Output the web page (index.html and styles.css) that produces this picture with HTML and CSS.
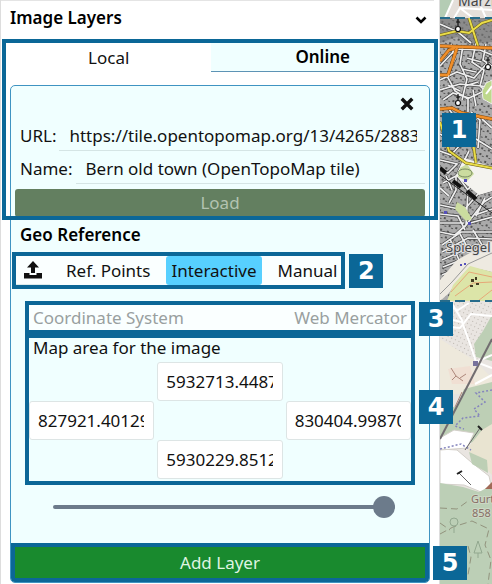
FILE: index.html
```
<!DOCTYPE html>
<html lang="en">
<head>
<meta charset="utf-8">
<meta name="viewport" content="width=device-width, initial-scale=1">
<title>Image Layers</title>
<link rel="stylesheet" href="styles.css">
</head>
<body>
<div class="app">
  <main class="panel">
    <header class="panel-head">
      <h1 class="title">Image Layers</h1>
      <button class="icon-btn" type="button" aria-label="Collapse">
        <svg width="12" height="8" viewBox="0 0 12 8"><path d="M1.500 1.500 6 6 10.500 1.500" fill="none" stroke="#000" stroke-width="2.600"/></svg>
      </button>
    </header>
    <div class="tabs">
      <button class="tab" type="button">Local</button>
      <button class="tab tab-off" type="button">Online</button>
    </div>
    <section class="card">
      <div class="close-row">
        <button class="icon-btn" type="button" aria-label="Close">
          <svg width="14" height="14" viewBox="0 0 12 12"><path d="M1.500 1.500 10.500 10.500M10.500 1.500 1.500 10.500" stroke="#111" stroke-width="2.900"/></svg>
        </button>
      </div>
      <div class="field"><label for="url">URL:</label><input id="url" class="line-input" type="text" value="https://tile.opentopomap.org/13/4265/2883.png"></div>
      <div class="field"><label for="name">Name:</label><input id="name" class="line-input" type="text" value="Bern old town (OpenTopoMap tile)"></div>
      <button class="load" type="button" disabled>Load</button>
      <h2 class="title geo">Geo Reference</h2>
      <div class="modes framed">
        <button class="mode upload" type="button" aria-label="Upload">
          <svg width="18" height="18" viewBox="0 0 18 18" fill="#111"><path d="M9 0 15 6.500H11V12H7V6.500H3Z"/><path d="M0 12H5.500V14H12.500V12H18V17.500H0Z"/></svg>
        </button>
        <button class="mode" type="button">Ref. Points</button>
        <button class="mode mode-on" type="button">Interactive</button>
        <button class="mode" type="button">Manual</button>
        <span class="badge">2</span>
      </div>
      <div class="system framed">
        <span>Coordinate System</span><span>Web Mercator</span>
        <span class="badge">3</span>
      </div>
      <div class="area framed">
        <p class="area-title">Map area for the image</p>
        <div class="bounds">
          <input class="north" type="text" aria-label="North" value="5932713.44873">
          <input class="west" type="text" aria-label="West" value="827921.401296">
          <input class="east" type="text" aria-label="East" value="830404.998706">
          <input class="south" type="text" aria-label="South" value="5930229.85123">
        </div>
        <span class="badge">4</span>
      </div>
      <input class="opacity" type="range" aria-label="Opacity" min="0" max="100" value="100">
      <div class="add framed">
        <button class="add-btn" type="button">Add Layer</button>
        <span class="badge">5</span>
      </div>
    </section>
    <div class="source-frame"><span class="badge">1</span></div>
  </main>
  <aside class="map">
    <svg viewBox="0 0 52 584" preserveAspectRatio="xMinYMin slice" role="img" aria-label="Map">
      <defs>
        <clipPath id="topo"><rect y="18" width="52" height="283"/></clipPath>
        <pattern id="houses" width="7" height="6" patternUnits="userSpaceOnUse" patternTransform="rotate(18)"><path d="M1 1h2v2h-2zM4 3h2v1h-2z" fill="#555"/></pattern>
        <pattern id="dots" width="4" height="4" patternUnits="userSpaceOnUse" patternTransform="rotate(25)"><path d="M1 1h1v1h-1z" fill="#bbb5ae"/></pattern>
        <path id="road-net" d="M0 24 18 32 31 43M0 66 16 49 40 50 52 55M0 80 17 72 34 78 49 61M11 44 15 59 7 76 15 91 28 99 28 112M23 45 20 64 27 79 22 100M36 43 32 62 44 70 40 86 52 97M46 44 43 60 52 66M0 90 20 84 52 87M3 100 13 93 29 98 44 91M0 134 14 142 31 136 52 149M0 151 11 155 22 143 22 126M0 160 17 164 8 173 0 170M3 183 16 176 16 190 9 203M0 205 24 210 38 194 52 190M0 214 18 216 25 230M0 223 24 223M0 232 15 235 26 225M29 151 17 175 28 190 26 225 44 202 52 197M2 245 21 232 52 232M2 252 28 238 52 239M2 260 33 246 52 246M3 267 39 253M2 275 43 258M2 283 25 270M10 239 19 260M20 234 30 252M33 230 42 245M35 215 52 209M30 223 52 217M36 177 28 190M31 112 40 120 38 148M42 119 52 128M8 108 18 121 33 127M27 58 41 62M22 69 36 72M25 86 38 82M33 90 36 106M8 85 20 91M2 142 10 134M0 188 9 196M6 176 12 190M30 142 34 150M45 198 36 216"/>
      </defs>
      <rect width="52" height="584" fill="#e4dfda"/>
      <path d="M0 0H13L5 18H0Z" fill="#b4ccb4"/>
      <path d="M5 18 13 0M14 18 20 8 33 18M38 0 46 18M20 8 52 10" stroke="#fff" stroke-width="2" fill="none"/>
      <g clip-path="url(#topo)">
        <rect y="18" width="52" height="283" fill="#aaa"/>
        <rect y="18" width="52" height="283" fill="url(#houses)"/>
        <path d="M0 43 17 37 28 44 52 42V18H0Z" fill="#777" opacity=".6"/>
        <g fill="none">
          <use href="#road-net" stroke="#444" stroke-width="3"/>
          <use href="#road-net" stroke="#eee" stroke-width="1.700"/>
        </g>
        <path d="M52 80 46 83 42 91 43 99 52 104Z" fill="#bed88c" stroke="#eee"/>
        <path d="M46 94 52 86" stroke="#fff" stroke-width="2"/>
        <path d="M24 158 52 167V191L39 195 16 176Z" fill="#f4f3ef"/>
        <path d="M20 168 27 164 34 174 27 181 18 177ZM17 202 25 207 32 219 26 221 15 209Z" fill="#cbdc9f"/>
        <ellipse cx="25" cy="173" rx="7" ry="4" fill="none" stroke="#788b61"/>
        <path d="M0 168 6 173M13 181 21 187M27 191 36 199" stroke="#111" stroke-width="4"/>
        <path d="M0 175 52 213" stroke="#222" stroke-width="1"/>
        <path d="M0 280 17 260 52 241V272L30 267 8 294 0 301Z" fill="#eeeae1"/>
        <path d="M0 294 12 282 28 264 52 253" stroke="#999" stroke-width="1" fill="none"/>
        <path d="M7 301 13 285 30 266 52 272V301Z" fill="#dce5a8"/>
        <path d="M11 292 29 272 52 277M15 296 33 283 52 282M38 301 52 290" stroke="#e6a878" fill="none"/>
        <path d="M31 279h3v3h-3zM35 277h2v3h-2zM30 285h3v2h-3zM36 283h3v2h-3z" fill="#443c24"/>
        <g fill="none"><path d="M0 35 17 31 29 33 42 23 52 20M0 122 9 151 26 163 52 168M29 18 38 46M32 135 36 163" stroke="#665a12" stroke-width="3"/><path d="M0 35 17 31 29 33 42 23 52 20M0 122 9 151 26 163 52 168M29 18 38 46M32 135 36 163" stroke="#e9dc48" stroke-width="2"/></g>
        <path d="M0 46 52 48M0 61 9 50 15 48M8 75 17 48M0 75 8 75M0 109 12 108 22 113 52 119" stroke="#83480b" stroke-width="3.500" fill="none"/><path d="M0 46 52 48M0 61 9 50 15 48M8 75 17 48M0 75 8 75M0 109 12 108 22 113 52 119" stroke="#f08f2b" stroke-width="2.500" fill="none"/>
        <g fill="#fff" stroke="#111" stroke-width="1.200"><circle cx="18" cy="29" r="2.500"/><path d="M18 26V19M16 22H20"/><circle cx="48" cy="67" r="2.500"/><path d="M48 64V57M46 60H50"/><circle cx="18" cy="103" r="2.500"/><path d="M18 100V94M16 97H20"/></g>
        <path d="M24 179h3v3h-3zM4 211h3v3h-3zM28 222h3v3h-3zM20 264h2v2h-2zM24 263h2v2h-2z" fill="#5550bb"/>
      </g>
      <rect y="301" width="52" height="283" fill="#e9e5e1"/>
      <path d="M0 302H52V340L34 363 0 338Z" fill="url(#dots)"/>
      <path d="M0 339 34 360 52 378V394H0Z" fill="#eee9dc"/>
      <path d="M8 369 30 366 35 384 12 384Z" fill="#f0dfd3"/>
      <path d="M52 315 43 331 34 344 36 357 52 361ZM24 389 52 382V435L30 443 0 440V407L17 407Z" fill="#bdcfb5"/>
      <path d="M0 438 14 430 34 433 27 448 0 450ZM0 449 17 450 31 462 49 476 52 490 41 492 24 485 0 484Z" fill="#fff" stroke="#d4d0ca"/>
      <path d="M27 449 42 430 52 424V475Z" fill="#e9e4d1"/>
      <path d="M29 452 47 460 48 473 32 464Z" fill="#bdcfb5"/>
      <path d="M0 483 23 487 39 492 52 485V584H0Z" fill="#bccfb6"/>
      <path d="M0 304 18 310 29 303M3 318 22 322 30 344 36 362 52 368M0 326 20 328 31 314 52 316M11 302 23 322M36 362 52 355M35 384 52 375" fill="none" stroke="#fff" stroke-width="2"/>
      <path d="M0 439 52 339" stroke="#716d70" stroke-width="2"/>
      <path d="M33 361h5v5h-5z" fill="#77739c"/><path d="M11 368 16 376 23 381M16 376 12 380M20 378 26 374M22 392 15 407" stroke="#ae877b" fill="none"/>
      <path d="M52 390 36 393 45 402 34 409 40 416 23 418 15 426 24 429M0 449 21 444 31 450" fill="none" stroke="#8585bd" stroke-width="1.500" stroke-dasharray="2 2"/>
      <path d="M25 450 40 428M19 473 31 485" stroke="#666"/><path d="M38 426 42 430M17 474 22 471" stroke="#222" stroke-width="2"/>
      <path d="M52 482 45 489 52 489Z" fill="#a16a57"/>
      <path d="M0 508 17 509 28 501M0 534 13 527 32 521 49 529 45 545 51 560 48 584M0 523 10 530M28 546 31 557 28 575" fill="none" stroke="#92937d" stroke-dasharray="7 4"/>
      <g fill="none" stroke="#92a88f"><circle cx="14" cy="522" r="4"/><path d="M14 526V533M38 541 34 553H42ZM38 553V558"/></g>
      <path d="M0 18H52M0 301H52" stroke="#276c8b" stroke-width="2" stroke-dasharray="10 5"/>
      <text class="map-label" x="18" y="6">Marzili</text>
      <text class="map-label spiegel" x="6" y="252">Spiegel</text>
      <text class="map-label peak" x="31" y="503">Gurten</text>
      <text class="map-label peak" x="32" y="517">858</text>
    </svg>
  </aside>
</div>
</body>
</html>
```
FILE: styles.css
```
* { box-sizing: border-box; }
body { margin: 0; background: #fff; color: #111; font: 17px/24px "Noto Sans", "Open Sans", sans-serif; }
button, input { font: inherit; color: inherit; margin: 0; border: 0; padding: 0; background: none; min-width: 0; }
h1, h2, p { margin: 0; }
.app { display: grid; grid-template-columns: minmax(0, 1fr) 53px; min-height: 100vh; }
.panel { position: relative; z-index: 1; border-left: 1px solid #ddd; padding-right: 5px; }
.title { font-size: 17px; font-weight: 600; line-height: 24px; color: #000; }
.panel-head { display: flex; align-items: center; justify-content: space-between; height: 43px; padding: 0 7px 8px 9px; border-top: 1px solid #e4e4e4; }
.icon-btn { display: grid; place-items: center; width: 20px; height: 20px; }
.panel-head .icon-btn { width: 12px; padding-top: 4px; }
.tabs { display: grid; grid-template-columns: 48fr 52fr; height: 29px; padding-left: 5px; }
.tab { line-height: 24px; }
.tab-off { background: #f0ffff; border-bottom: 1px solid #5d93b5; font-weight: 600; color: #000; }
.card { margin: 13px 4px 0 9px; border: 1px solid #3f94c2; border-radius: 5px; background: #f0ffff; padding: 0 4px; }
.close-row { display: flex; justify-content: flex-end; height: 32px; padding: 8px 8px 0 0; }
.field { display: flex; align-items: center; gap: 3px; height: 33px; padding-left: 5px; }
.line-input { flex: 1; height: 33px; padding: 4px 8px 1px 10px; border-bottom: 1px solid #d5e5e5; }
.field label { padding-top: 3px; }
.load { display: block; width: 100%; height: 28px; margin-top: 5px; border-radius: 3px; background: #637f60; color: #b3c3b1; line-height: 24px; }
.geo { padding: 6px 5px; height: 39px; }
.framed { position: relative; }
.framed::after { content: ""; position: absolute; inset: -4px; border: 4px solid #0b6797; pointer-events: none; }
.source-frame { position: absolute; top: 39px; left: 1px; right: 1px; height: 181px; border: 4px solid #0b6797; pointer-events: none; }
.badge { position: absolute; z-index: 2; display: grid; place-items: center; width: 34px; height: 34px; background: #0b6797; color: #fff; font: 700 24px/34px "DejaVu Sans", sans-serif; }
.source-frame .badge { right: -42px; top: 70px; }
.modes { display: flex; width: fit-content; height: 29px; margin-left: 1px; background: #faffff; }
.mode { padding: 0 16px; line-height: 26px; }
.upload { display: grid; place-items: center; width: 34px; padding: 0; border-bottom: 1px solid #dcebeb; }
.mode-on { padding: 0 5px; background: #57d0ff; border-radius: 3px; }
.modes .mode:nth-child(4) { padding-right: 4px; }
.modes .badge { right: -42px; top: -2px; }
.system { display: flex; justify-content: space-between; align-items: center; height: 25px; margin: 20px 14px 0; padding: 0 4px; background: #faffff; color: #999f9f; }
.system .badge { right: -42px; top: -3px; }
.area { margin: 8px 14px 0; height: 143px; }
.area-title { padding: 0 4px; height: 24px; line-height: 20px; }
.bounds { display: grid; grid-template: repeat(3, 39px) / repeat(3, minmax(0, 1fr)); column-gap: 3px; }
.bounds input { width: 100%; padding: 0 9px 0 8px; border: 1px solid #dde5e5; border-radius: 3px; background: #fff; }
.north { grid-area: 1 / 2; }
.west { grid-area: 2 / 1; }
.east { grid-area: 2 / 3; }
.south { grid-area: 3 / 2; }
.area .badge { right: -42px; top: 52px; }
.opacity { display: block; appearance: none; width: calc(100% - 68px); height: 24px; margin: 14px 30px 0 38px; }
.opacity::-webkit-slider-runnable-track { height: 4px; border-radius: 2px; background: #6c7b8b; }
.opacity::-webkit-slider-thumb { appearance: none; width: 22px; height: 22px; margin-top: -9px; border-radius: 50%; background: #6c7b8b; }
.add { margin-top: 28px; margin-bottom: 4px; }
.add-btn { display: block; width: 100%; height: 31px; background: #198a2e; color: #dff4e2; line-height: 28px; }
.add::after { border-radius: 0 0 4px 4px; }
.add .badge { right: -42px; top: -1px; }
.map { overflow: hidden; border-left: 1px solid #ddd; background: #bccfb6; }
.map svg { display: block; width: 100%; min-height: 584px; }
.map-label { font: 14px "Noto Sans", sans-serif; fill: #444; stroke: #ddd; stroke-width: 2px; paint-order: stroke; }
.spiegel { font-size: 13px; }
.peak { font-size: 11px; fill: #886f66; stroke: #ccd8c5; }
```
